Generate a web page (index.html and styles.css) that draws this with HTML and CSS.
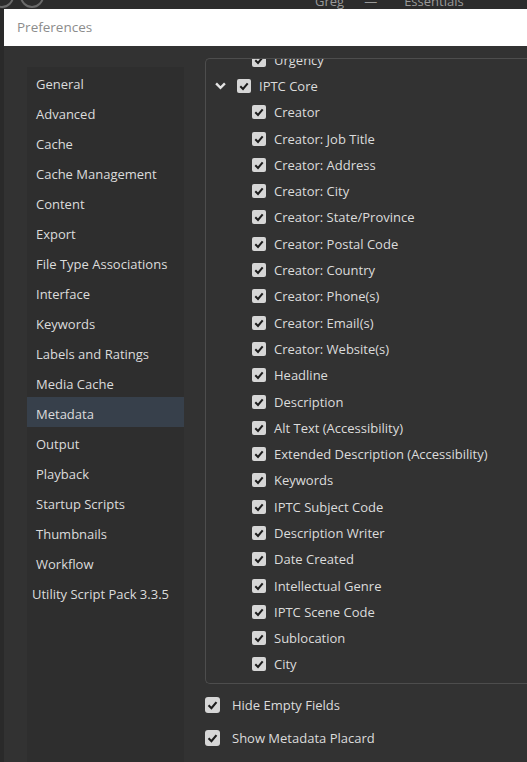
FILE: index.html
```html
<!DOCTYPE html>
<html>
<head>
<meta charset="utf-8">
<link rel="stylesheet" href="styles.css">
</head>
<body>
<div class="appbar">
  <div class="appbar-left">
    <span class="ring"></span><span class="ring ring2"></span>
  </div>
  <span class="app-user">Greg</span>
  <span class="app-dash">—</span>
  <span class="app-ws">Essentials</span>
</div>
<div class="window">
  <div class="backstrip"></div>
  <div class="dialog">
    <div class="titlebar">Preferences</div>
    <div class="dbody">
      <nav class="sidebar">
        <div class="nav-item">General</div>
        <div class="nav-item">Advanced</div>
        <div class="nav-item">Cache</div>
        <div class="nav-item">Cache Management</div>
        <div class="nav-item">Content</div>
        <div class="nav-item">Export</div>
        <div class="nav-item">File Type Associations</div>
        <div class="nav-item">Interface</div>
        <div class="nav-item">Keywords</div>
        <div class="nav-item">Labels and Ratings</div>
        <div class="nav-item">Media Cache</div>
        <div class="nav-item selected">Metadata</div>
        <div class="nav-item">Output</div>
        <div class="nav-item">Playback</div>
        <div class="nav-item">Startup Scripts</div>
        <div class="nav-item">Thumbnails</div>
        <div class="nav-item">Workflow</div>
        <div class="nav-item plugin">Utility Script Pack 3.3.5</div>
      </nav>
      <main class="content">
        <div class="tree-panel">
          <div class="tree">
            <div class="row child"><span class="cb"><svg viewBox="0 0 14 14"><polyline points="3.3,7.3 6,10 10.7,4.3"/></svg></span><span>Urgency</span></div>
            <div class="row group"><svg class="chev" viewBox="0 0 10 7"><polyline points="1,1.2 5,5.2 9,1.2"/></svg><span class="cb"><svg viewBox="0 0 14 14"><polyline points="3.3,7.3 6,10 10.7,4.3"/></svg></span><span>IPTC Core</span></div>
            <div class="row child"><span class="cb"><svg viewBox="0 0 14 14"><polyline points="3.3,7.3 6,10 10.7,4.3"/></svg></span><span>Creator</span></div>
            <div class="row child"><span class="cb"><svg viewBox="0 0 14 14"><polyline points="3.3,7.3 6,10 10.7,4.3"/></svg></span><span>Creator: Job Title</span></div>
            <div class="row child"><span class="cb"><svg viewBox="0 0 14 14"><polyline points="3.3,7.3 6,10 10.7,4.3"/></svg></span><span>Creator: Address</span></div>
            <div class="row child"><span class="cb"><svg viewBox="0 0 14 14"><polyline points="3.3,7.3 6,10 10.7,4.3"/></svg></span><span>Creator: City</span></div>
            <div class="row child"><span class="cb"><svg viewBox="0 0 14 14"><polyline points="3.3,7.3 6,10 10.7,4.3"/></svg></span><span>Creator: State/Province</span></div>
            <div class="row child"><span class="cb"><svg viewBox="0 0 14 14"><polyline points="3.3,7.3 6,10 10.7,4.3"/></svg></span><span>Creator: Postal Code</span></div>
            <div class="row child"><span class="cb"><svg viewBox="0 0 14 14"><polyline points="3.3,7.3 6,10 10.7,4.3"/></svg></span><span>Creator: Country</span></div>
            <div class="row child"><span class="cb"><svg viewBox="0 0 14 14"><polyline points="3.3,7.3 6,10 10.7,4.3"/></svg></span><span>Creator: Phone(s)</span></div>
            <div class="row child"><span class="cb"><svg viewBox="0 0 14 14"><polyline points="3.3,7.3 6,10 10.7,4.3"/></svg></span><span>Creator: Email(s)</span></div>
            <div class="row child"><span class="cb"><svg viewBox="0 0 14 14"><polyline points="3.3,7.3 6,10 10.7,4.3"/></svg></span><span>Creator: Website(s)</span></div>
            <div class="row child"><span class="cb"><svg viewBox="0 0 14 14"><polyline points="3.3,7.3 6,10 10.7,4.3"/></svg></span><span>Headline</span></div>
            <div class="row child"><span class="cb"><svg viewBox="0 0 14 14"><polyline points="3.3,7.3 6,10 10.7,4.3"/></svg></span><span>Description</span></div>
            <div class="row child"><span class="cb"><svg viewBox="0 0 14 14"><polyline points="3.3,7.3 6,10 10.7,4.3"/></svg></span><span>Alt Text (Accessibility)</span></div>
            <div class="row child"><span class="cb"><svg viewBox="0 0 14 14"><polyline points="3.3,7.3 6,10 10.7,4.3"/></svg></span><span>Extended Description (Accessibility)</span></div>
            <div class="row child"><span class="cb"><svg viewBox="0 0 14 14"><polyline points="3.3,7.3 6,10 10.7,4.3"/></svg></span><span>Keywords</span></div>
            <div class="row child"><span class="cb"><svg viewBox="0 0 14 14"><polyline points="3.3,7.3 6,10 10.7,4.3"/></svg></span><span>IPTC Subject Code</span></div>
            <div class="row child"><span class="cb"><svg viewBox="0 0 14 14"><polyline points="3.3,7.3 6,10 10.7,4.3"/></svg></span><span>Description Writer</span></div>
            <div class="row child"><span class="cb"><svg viewBox="0 0 14 14"><polyline points="3.3,7.3 6,10 10.7,4.3"/></svg></span><span>Date Created</span></div>
            <div class="row child"><span class="cb"><svg viewBox="0 0 14 14"><polyline points="3.3,7.3 6,10 10.7,4.3"/></svg></span><span>Intellectual Genre</span></div>
            <div class="row child"><span class="cb"><svg viewBox="0 0 14 14"><polyline points="3.3,7.3 6,10 10.7,4.3"/></svg></span><span>IPTC Scene Code</span></div>
            <div class="row child"><span class="cb"><svg viewBox="0 0 14 14"><polyline points="3.3,7.3 6,10 10.7,4.3"/></svg></span><span>Sublocation</span></div>
            <div class="row child"><span class="cb"><svg viewBox="0 0 14 14"><polyline points="3.3,7.3 6,10 10.7,4.3"/></svg></span><span>City</span></div>
            <div class="row child"><span class="cb"><svg viewBox="0 0 14 14"><polyline points="3.3,7.3 6,10 10.7,4.3"/></svg></span></div>
          </div>
        </div>
        <div class="options">
          <div class="opt"><span class="cb big"><svg viewBox="0 0 14 14"><polyline points="3.3,7.3 6,10 10.7,4.3"/></svg></span><span>Hide Empty Fields</span></div>
          <div class="opt"><span class="cb big"><svg viewBox="0 0 14 14"><polyline points="3.3,7.3 6,10 10.7,4.3"/></svg></span><span>Show Metadata Placard</span></div>
        </div>
      </main>
    </div>
  </div>
</div>
</body>
</html>
```

FILE: styles.css
```css
* { box-sizing: border-box; }
html, body { margin: 0; padding: 0; }
body {
  width: 527px;
  height: 762px;
  overflow: hidden;
  background: #2b2b2b;
  font-family: "Open Sans", "Noto Sans", sans-serif;
  color: #dcdcdc;
}

.appbar {
  height: 9px;
  overflow: hidden;
  display: flex;
  align-items: flex-end;
  background: #2c2c2c;
  font-size: 13px;
  color: #9a9a9a;
  line-height: 1;
}
.appbar-left { width: 315px; height: 9px; display: flex; flex-shrink: 0; }
.ring {
  width: 24px; height: 24px;
  border: 2px solid #6a6a6a;
  border-radius: 50%;
  margin-top: -16px;
  margin-left: -10px;
}
.ring2 { margin-left: 6px; }
.app-user { margin-bottom: 1px; }
.app-dash { margin-left: 20px; margin-bottom: 1px; }
.app-ws { margin-left: 27px; margin-bottom: 1px; }

.window { display: flex; height: 753px; }
.backstrip { width: 4px; background: #2a2a2a; }
.dialog { flex: 1; display: flex; flex-direction: column; }

.titlebar {
  height: 37px;
  background: #ffffff;
  color: #8c8c8c;
  font-size: 13.5px;
  padding-left: 13px;
  line-height: 37px;
}

.dbody {
  flex: 1;
  display: flex;
  background: #323232;
  overflow: hidden;
}

.sidebar {
  width: 157px;
  margin-left: 23px;
  margin-top: 21px;
  background: #2e2e2e;
  font-size: 13px;
  flex-shrink: 0;
}
.nav-item {
  height: 30px;
  line-height: 28px;
  padding-top: 3px;
  padding-left: 9px;
  color: #dcdcdc;
  white-space: nowrap;
}
.nav-item.selected { background: #37404b; }
.nav-item.plugin { padding-left: 5px; }

.content {
  flex: 1;
  margin-left: 21px;
  display: flex;
  flex-direction: column;
  min-width: 0;
}

.tree-panel {
  margin-top: 12px;
  height: 626px;
  border: 1px solid #4d4d4d;
  border-right: none;
  border-radius: 5px 0 0 5px;
  overflow: hidden;
  margin-right: -6px;
}
.tree { margin-top: -12.5px; font-size: 13px; }
.row {
  height: 26.3px;
  display: flex;
  align-items: center;
  white-space: nowrap;
}
.row.group { padding-left: 9px; }
.row.child { padding-left: 46px; }
.chev {
  width: 11px; height: 8px;
  fill: none;
  stroke: #e4e4e4;
  stroke-width: 2.2;
  margin-right: 11px;
}
.cb {
  width: 14px; height: 14px;
  border-radius: 2px;
  background: #d6d6d6;
  display: inline-flex;
  margin-right: 8px;
  flex-shrink: 0;
}
.cb svg {
  width: 14px; height: 14px;
  fill: none;
  stroke: #1c1c1c;
  stroke-width: 2;
}
.cb.big { width: 15px; height: 16px; border-radius: 3px; margin-right: 12px; }
.cb.big svg { width: 15px; height: 16px; }

.options { padding-top: 4px; font-size: 13px; }
.opt {
  height: 33px;
  display: flex;
  align-items: center;
  white-space: nowrap;
}
```
